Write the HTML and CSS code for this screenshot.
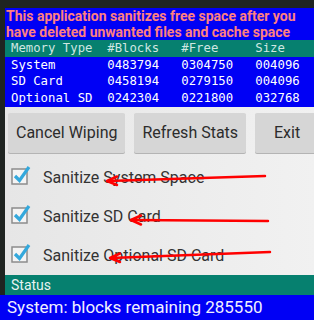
FILE: index.html
```html
<!DOCTYPE html>
<html lang="en">
  <head>
    <meta charset="UTF-8" />
    <meta name="viewport" content="width=device-width, initial-scale=1.0" />
    <title>Sanitizer</title>
    <link rel="stylesheet" href="styles.css">
  </head>

  <body>
    <div class="screen">
      <div class="app">
        <!-- Intro text -->
        <div class="intro">
          This application sanitizes free space after you<br />
          have deleted unwanted files and cache space
        </div>

        <!-- Memory stats, fixed width columns -->
        <div class="stats">
          <div class="stats-row stats-head">Memory Type  #Blocks   #Free     Size</div>
          <div class="stats-row">System       0483794   0304750   004096</div>
          <div class="stats-row">SD Card      0458194   0279150   004096</div>
          <div class="stats-row">Optional SD  0242304   0221800   032768</div>
        </div>

        <div class="panel">
          <div class="actions">
            <button class="btn">Cancel Wiping</button>
            <button class="btn">Refresh Stats</button>
            <button class="btn btn-exit">Exit</button>
          </div>

          <label class="option">
            <span class="box">
              <svg width="22" height="22" viewBox="0 0 22 22">
                <rect x="1" y="5" width="15" height="15" fill="#f4f4f4" stroke="#8c8c8c" stroke-width="1.5" />
                <path d="M4 12 L8.5 16.5 L18 3" fill="none" stroke="#33a8dc" stroke-width="3.2" />
              </svg>
            </span>
            Sanitize System Space
          </label>
          <label class="option">
            <span class="box">
              <svg width="22" height="22" viewBox="0 0 22 22">
                <rect x="1" y="5" width="15" height="15" fill="#f4f4f4" stroke="#8c8c8c" stroke-width="1.5" />
                <path d="M4 12 L8.5 16.5 L18 3" fill="none" stroke="#33a8dc" stroke-width="3.2" />
              </svg>
            </span>
            Sanitize SD Card
          </label>
          <label class="option">
            <span class="box">
              <svg width="22" height="22" viewBox="0 0 22 22">
                <rect x="1" y="5" width="15" height="15" fill="#f4f4f4" stroke="#8c8c8c" stroke-width="1.5" />
                <path d="M4 12 L8.5 16.5 L18 3" fill="none" stroke="#33a8dc" stroke-width="3.2" />
              </svg>
            </span>
            Sanitize Optional SD Card
          </label>
        </div>

        <div class="status-title">Status</div>
      </div>

      <div class="status-line">System: blocks remaining 285550</div>

      <!-- Hand drawn red arrows on top of the screenshot -->
      <svg class="marks" width="314" height="320" viewBox="0 0 314 320">
        <g fill="none" stroke="#ff0000" stroke-width="2.5" stroke-linecap="round" stroke-linejoin="round">
          <path d="M265 176 L108 181" />
          <path d="M117 176.5 L107 181 L117 185" />
          <path d="M268 221 L131 220" />
          <path d="M141 215.5 L131 220 L141 224.5" />
          <path d="M270 252 L111 258" />
          <path d="M120 253.5 L110 258 L120 262" />
        </g>
      </svg>
    </div>
  </body>
</html>
```

FILE: styles.css
```css
body {
  margin: 0;
  width: 314px;
  height: 320px;
  overflow: hidden;
  background-color: #1f2421;
  font-family: Roboto, "Liberation Sans", sans-serif;
}

.screen {
  position: relative;
  padding-top: 8px;
}

.app {
  margin-left: 5px;
  overflow: hidden;
}

.intro {
  background-color: #0000f5;
  color: #ff8080;
  font-weight: bold;
  font-size: 14px;
  line-height: 16px;
  padding-left: 1px;
  white-space: nowrap;
}

.stats {
  background-color: #0000f5;
}

.stats-row {
  font-family: "DejaVu Sans Mono", "Liberation Mono", monospace;
  font-size: 12.3px;
  line-height: 16.7px;
  color: #ffffff;
  padding-left: 6px;
  white-space: pre;
}

.stats-head {
  background-color: #06806f;
  color: #cfe7e2;
}

/* Grey area with buttons and options */
.panel {
  background: linear-gradient(to right, #e6e6e6, #f1f1f1);
  padding-top: 6px;
}

.actions {
  display: flex;
  gap: 9px;
  padding-left: 3px;
  margin-bottom: 5px;
}

.btn {
  flex: none;
  height: 40px;
  padding: 0 8px;
  background-color: #d6d6d6;
  color: #2c2c2c;
  border: none;
  border-radius: 2px;
  box-shadow: 0 1px 0 #b4b4b4;
  font-family: Roboto, "Liberation Sans", sans-serif;
  font-size: 16px;
}

.btn-exit {
  min-width: 64px;
  padding: 0 16px;
}

.option {
  display: flex;
  align-items: center;
  height: 39px;
  padding-left: 6px;
  color: #333333;
  font-size: 16px;
}

.box {
  display: block;
  width: 22px;
  height: 22px;
  margin-top: -5px;
  margin-right: 10px;
}

.status-title {
  background-color: #06806f;
  color: #e6f3f1;
  font-size: 14px;
  line-height: 20px;
  padding-left: 6px;
}

.status-line {
  background-color: #0000f5;
  color: #f0f0ff;
  font-size: 17px;
  line-height: 25px;
  padding-left: 7px;
}

.marks {
  position: absolute;
  left: 0;
  top: 0;
}
```
